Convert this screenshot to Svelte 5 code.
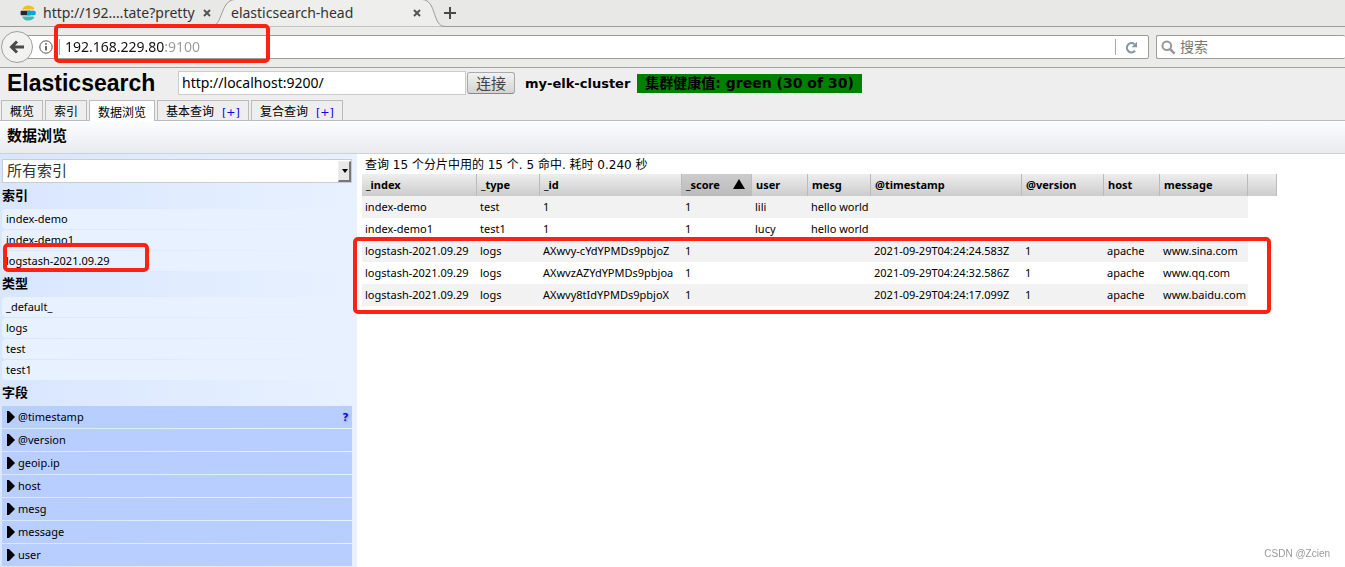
<script lang="ts">
  interface Column {
    name: string;
    width: number;
  }

  const columns: Column[] = [
    { name: '_index', width: 115 },
    { name: '_type', width: 63 },
    { name: '_id', width: 142 },
    { name: '_score', width: 70 },
    { name: 'user', width: 56 },
    { name: 'mesg', width: 63 },
    { name: '@timestamp', width: 151 },
    { name: '@version', width: 82 },
    { name: 'host', width: 56 },
    { name: 'message', width: 88 },
    { name: '', width: 29 }
  ];

  const rows: string[][] = [
    ['index-demo', 'test', '1', '1', 'lili', 'hello world', '', '', '', ''],
    ['index-demo1', 'test1', '1', '1', 'lucy', 'hello world', '', '', '', ''],
    ['logstash-2021.09.29', 'logs', 'AXwvy-cYdYPMDs9pbjoZ', '1', '', '', '2021-09-29T04:24:24.583Z', '1', 'apache', 'www.sina.com'],
    ['logstash-2021.09.29', 'logs', 'AXwvzAZYdYPMDs9pbjoa', '1', '', '', '2021-09-29T04:24:32.586Z', '1', 'apache', 'www.qq.com'],
    ['logstash-2021.09.29', 'logs', 'AXwvy8tIdYPMDs9pbjoX', '1', '', '', '2021-09-29T04:24:17.099Z', '1', 'apache', 'www.baidu.com']
  ];

  const indices = ['index-demo', 'index-demo1', 'logstash-2021.09.29'];
  const types = ['_default_', 'logs', 'test', 'test1'];
  const fields = ['@timestamp', '@version', 'geoip.ip', 'host', 'mesg', 'message', 'user'];

  const tabs = [
    { label: '概览', more: false },
    { label: '索引', more: false },
    { label: '数据浏览', more: false },
    { label: '基本查询', more: true },
    { label: '复合查询', more: true }
  ];

  let activeTab = $state('数据浏览');
  let sortBy = $state('_score');
  let address = $state('192.168.229.80:9100');
  let baseUri = $state('http://localhost:9200/');

  const tableWidth = $derived(columns.reduce((sum, col) => sum + col.width, 0));
</script>

{#snippet cross()}
  <svg width="8" height="8" viewBox="0 0 8 8"><path d="M1 1L7 7M7 1L1 7" stroke="#555" stroke-width="2" /></svg>
{/snippet}

<div class="browser">
  <div class="tab-strip">
    <div class="browser-tab">
      <svg width="16" height="16" viewBox="0 0 16 16">
        <path d="M2 4.6C3.3 1.8 5.5.4 8.3.4c2.4 0 4.5 1 5.8 2.7.3.5.2.9-.2 1.1l-1.2.4z" fill="#f0bf1a" />
        <path d="M.8 5.8h9.4a2.2 2.2 0 0 1 0 4.4H.8a9 9 0 0 1 0-4.4z" fill="#23282d" />
        <path d="M7 5.8h6.7a2.2 2.2 0 0 1 0 4.4H7z" fill="#07a5de" />
        <path d="M2 11.4h10.7l1.2.4c.4.2.5.6.2 1.1a7.3 7.3 0 0 1-5.8 2.7c-2.8 0-5-1.4-6.3-4.2z" fill="#3ebeb0" />
      </svg>
      <span class="tab-title">http://192.…tate?pretty</span>
      <button class="plain" aria-label="Close tab">{@render cross()}</button>
    </div>
    <div class="browser-tab current">
      <svg class="tab-shape" width="234" height="27" viewBox="0 0 234 27">
        <path d="M0 26.5C12 26.5 9 0 24 -.5H211C226 0 221 26.5 234 26.5" fill="#eeeeec" stroke="#9b9b99" />
      </svg>
      <span class="tab-title">elasticsearch-head</span>
      <button class="plain" aria-label="Close tab">{@render cross()}</button>
    </div>
    <button class="plain" aria-label="New tab">
      <svg width="12" height="12" viewBox="0 0 12 12"><path d="M6 0V12M0 6H12" stroke="#484848" stroke-width="2" /></svg>
    </button>
  </div>

  <div class="nav-bar">
    <button class="back" aria-label="Back">
      <svg width="16" height="14" viewBox="0 0 16 14"><path d="M8 1.5L2.5 7L8 12.5M3 7H15" fill="none" stroke="#4a4a4a" stroke-width="3" /></svg>
    </button>
    <div class="url-bar">
      <svg width="14" height="14" viewBox="0 0 14 14">
        <circle cx="7" cy="7" r="6.2" fill="none" stroke="#555" />
        <path d="M7 6v4.5M7 3.2v1.6" stroke="#444" stroke-width="1.6" />
      </svg>
      <div class="url-text">
        <input class="url-input" aria-label="Address" bind:value={address} />
        <span class="mark mark-url"></span>
      </div>
      <button class="reload" aria-label="Reload">
        <svg width="13" height="13" viewBox="0 0 13 13">
          <path d="M10 9.8A4.6 4.6 0 1 1 9.4 3.2" fill="none" stroke="#8597a6" stroke-width="2.2" />
          <path d="M12 .8V6.2H6.6z" fill="#8597a6" />
        </svg>
      </button>
    </div>
    <div class="search-bar">
      <svg width="15" height="15" viewBox="0 0 15 15">
        <circle cx="5.8" cy="5.8" r="4.3" fill="none" stroke="#979797" stroke-width="2" />
        <path d="M8.8 8.8L13.6 13.6" stroke="#979797" stroke-width="2.6" />
      </svg>
      <input aria-label="搜索" placeholder="搜索" />
    </div>
  </div>
</div>

<div class="app">
  <header>
    <h1>Elasticsearch</h1>
    <form class="connect">
      <input aria-label="Server" bind:value={baseUri} />
      <button type="button">连接</button>
    </form>
    <span class="cluster">my-elk-cluster</span>
    <span class="health">集群健康值: green (30 of 30)</span>
  </header>

  <nav class="app-tabs">
    {#each tabs as tab}
      <button class:active={tab.label === activeTab} onclick={() => (activeTab = tab.label)}>
        {tab.label}{#if tab.more}<span class="more">[+]</span>{/if}
      </button>
    {/each}
  </nav>

  <h2 class="section-title">{activeTab}</h2>

  <div class="browse">
    <aside>
      <div class="index-select">
        <select aria-label="索引">
          <option>所有索引</option>
        </select>
      </div>

      <h3>索引</h3>
      <ul class="filters">
        {#each indices as index}
          <li>
            {index}
            {#if index.startsWith('logstash')}<span class="mark mark-index"></span>{/if}
          </li>
        {/each}
      </ul>

      <h3>类型</h3>
      <ul class="filters">
        {#each types as type}
          <li>{type}</li>
        {/each}
      </ul>

      <h3>字段</h3>
      <ul class="fields">
        {#each fields as field, i}
          <li>
            <svg width="8" height="12" viewBox="0 0 8 12"><path d="M0 0H2L8 6L2 12H0z" /></svg>
            <span>{field}</span>
            {#if i === 0}<a class="help" href="#help">?</a>{/if}
          </li>
        {/each}
      </ul>
    </aside>

    <main>
      <p class="summary">查询 15 个分片中用的 15 个. 5 命中. 耗时 0.240 秒</p>
      <div class="results">
        <table style:width="{tableWidth}px">
          <colgroup>
            {#each columns as col}
              <col style:width="{col.width}px" />
            {/each}
          </colgroup>
          <thead>
            <tr>
              {#each columns as col}
                <th class:sorted={col.name === sortBy} onclick={() => (sortBy = col.name)}>
                  {col.name}
                  {#if col.name === sortBy}
                    <svg width="12" height="10" viewBox="0 0 12 10"><path d="M6 0L12 10H0z" /></svg>
                  {/if}
                </th>
              {/each}
            </tr>
          </thead>
          <tbody>
            {#each rows as row}
              <tr>
                {#each row as cell}
                  <td>{cell}</td>
                {/each}
              </tr>
            {/each}
          </tbody>
        </table>
        <span class="mark mark-rows"></span>
      </div>
    </main>
  </div>
</div>

<span class="watermark">CSDN @Zcien</span>

<style>
  :global(body) {
    background: #fff;
    color: #000;
    font-family: 'Noto Sans', 'Noto Sans CJK SC', sans-serif;
    font-size: 11px;
  }

  :global(#app) {
    display: flex;
    flex-direction: column;
    min-height: 100vh;
  }

  h1, h2, h3, p, ul {
    margin: 0;
    padding: 0;
  }

  button, input, select {
    box-sizing: border-box;
    font-family: inherit;
    margin: 0;
  }

  svg {
    display: block;
    flex: none;
  }

  .plain {
    border: 0;
    padding: 0;
    background: none;
  }

  .browser {
    font-size: 14px;
    color: #333;
  }

  .tab-strip {
    display: flex;
    align-items: center;
    height: 26px;
    background: #e8e8e6;
    border-bottom: 1px solid #9b9b99;
  }

  .browser-tab {
    display: flex;
    align-items: center;
    box-sizing: border-box;
    width: 211px;
    height: 26px;
    padding-left: 20px;
    padding-bottom: 1px;
  }

  .browser-tab.current {
    position: relative;
    width: 231px;
    padding-left: 20px;
    margin-right: 2px;
  }

  .tab-shape {
    position: absolute;
    left: 0;
    top: 0;
  }

  .tab-title {
    position: relative;
    flex: 1;
    white-space: nowrap;
  }

  .browser-tab svg + .tab-title {
    margin-left: 7px;
  }

  .browser-tab.current svg + .tab-title {
    margin-left: 0;
  }

  .browser-tab .plain {
    position: relative;
  }

  .browser-tab.current .plain {
    margin-right: 21px;
  }

  .nav-bar {
    display: flex;
    align-items: center;
    height: 40px;
    background: #ebebe9;
    border-bottom: 1px solid #a2a2a0;
  }

  .back {
    position: relative;
    z-index: 1;
    display: flex;
    align-items: center;
    justify-content: center;
    flex: none;
    width: 32px;
    height: 32px;
    margin-left: 1px;
    padding: 0;
    border: 1px solid #a0a0a0;
    border-radius: 50%;
    background: #f2f2f1;
  }

  .url-bar, .search-bar {
    display: flex;
    align-items: center;
    box-sizing: border-box;
    height: 24px;
    background: #fff;
    border: 1px solid #9c9c9a;
    border-radius: 2px;
  }

  .url-bar {
    flex: 1;
    margin-left: -8px;
    padding-left: 13px;
  }

  .url-text {
    position: relative;
    flex: 1;
    display: flex;
    margin-left: 6px;
    border-left: 1px solid #aaa;
  }

  /* host is dark, port is dimmed */
  .url-input {
    flex: 1;
    height: 16px;
    padding: 0 0 1px 5px;
    border: 0;
    outline: 0;
    font-size: 14px;
    color: transparent;
    background: linear-gradient(90deg, #111 105px, #999 105px);
    background-clip: text;
    -webkit-background-clip: text;
  }

  .reload {
    height: 16px;
    padding: 0 10px 0 9px;
    border: 0;
    border-left: 1px solid #aaa;
    background: none;
  }

  .search-bar {
    width: 189px;
    margin-left: 7px;
    padding-left: 4px;
    border-right: 0;
  }

  .search-bar input {
    flex: 1;
    min-width: 0;
    padding: 0 0 2px 4px;
    border: 0;
    font-size: 14px;
    background: none;
  }

  .search-bar input::placeholder {
    color: #777;
  }

  .app {
    flex: 1;
    display: flex;
    flex-direction: column;
    background: #eee;
  }

  header {
    display: flex;
    align-items: center;
    height: 30px;
    padding: 0 7px;
  }

  h1 {
    width: 171px;
    font-family: 'Liberation Sans', sans-serif;
    font-size: 23px;
    line-height: 30px;
  }

  .connect {
    display: flex;
    align-items: center;
    gap: 1px;
  }

  .connect input {
    width: 288px;
    height: 24px;
    padding: 0 3px 1px;
    border: 1px solid #ccc;
    font-size: 14px;
    background: #fff;
  }

  .connect button {
    width: 48px;
    height: 22px;
    padding: 0;
    border: 1px solid #aaa;
    border-bottom-color: #888;
    border-radius: 3px;
    font-size: 15px;
    line-height: 18px;
    color: #444;
    background: linear-gradient(#f2f2f2, #d4d4d2);
  }

  .cluster, .health {
    font-family: 'DejaVu Sans', 'Noto Sans CJK SC', sans-serif;
    font-size: 13px;
    font-weight: bold;
    line-height: 19px;
    white-space: nowrap;
  }

  .cluster {
    margin: 0 7px 0 10px;
  }

  .health {
    padding: 0 8px;
    font-size: 14px;
    background: #008000;
  }

  .app-tabs {
    display: flex;
    gap: 2px;
    padding: 2px 1px 0;
    border-bottom: 1px solid #bbb;
  }

  .app-tabs button {
    height: 20px;
    padding: 3px 8px 0;
    border: 1px solid #bbb;
    border-bottom: 0;
    font-size: 12px;
    line-height: 16px;
    color: #000;
    background: #eee;
  }

  .app-tabs .active {
    height: 21px;
    margin-bottom: -1px;
    background: #fff;
  }

  .more {
    margin-left: 8px;
    font-family: 'DejaVu Sans', sans-serif;
    font-size: 11px;
    color: #0000ee;
  }

  .section-title {
    height: 32px;
    padding-left: 7px;
    border-bottom: 1px solid #ced3d6;
    font-size: 15px;
    line-height: 28px;
    background: linear-gradient(#fcfdfd, #f2f4f7 50%, #e8ebed);
  }

  .browse {
    flex: 1;
    display: flex;
    background: #fff;
  }

  aside {
    box-sizing: border-box;
    width: 357px;
    flex: none;
    padding: 5px 5px 0 2px;
    background: linear-gradient(90deg, #d8e6fe, #e8f1ff);
  }

  .index-select {
    position: relative;
  }

  .index-select::before {
    content: '';
    position: absolute;
    right: 1px;
    top: 2px;
    width: 10px;
    height: 18px;
    border: 1px solid #eee;
    border-right: 2px solid #777;
    border-bottom: 2px solid #777;
    background: #e8e8e8;
    pointer-events: none;
  }

  .index-select::after {
    content: '';
    position: absolute;
    right: 4px;
    top: 10px;
    border: 3px solid transparent;
    border-top: 4px solid #000;
    border-bottom: 0;
    pointer-events: none;
  }

  select {
    display: block;
    width: 100%;
    height: 24px;
    padding: 0 4px 2px;
    border: 1px solid #ccc;
    border-radius: 0;
    appearance: none;
    font-size: 15px;
    color: #333;
    background: #fff;
  }

  h3 {
    padding-bottom: 2px;
    font-size: 13px;
    line-height: 24px;
  }

  ul {
    display: flex;
    flex-direction: column;
    gap: 1px;
    list-style: none;
  }

  .filters li {
    position: relative;
    padding-left: 4px;
    line-height: 20px;
    border-radius: 4px;
    background: #e8f1ff;
  }

  .fields li {
    display: flex;
    align-items: center;
    gap: 3px;
    padding: 0 4px 0 5px;
    line-height: 22px;
    background: #b8ceff;
  }

  .help {
    margin-left: auto;
    color: #0000dd;
    font-weight: bold;
    text-decoration: none;
    text-shadow: 1px 1px 2px #88a;
  }

  main {
    flex: 1;
    min-width: 0;
    padding-left: 5px;
  }

  .summary {
    padding: 2px 0 0 3px;
    font-family: 'DejaVu Sans', 'Noto Sans CJK SC', sans-serif;
    font-size: 12px;
    line-height: 18px;
  }

  .results {
    position: relative;
  }

  table {
    border-collapse: separate;
    border-spacing: 0;
    table-layout: fixed;
  }

  th, td {
    box-sizing: border-box;
    height: 22px;
    padding: 0 0 0 3px;
    line-height: 20px;
    text-align: left;
    white-space: nowrap;
  }

  th {
    padding-left: 4px;
    border-right: 1px solid #bbb;
    background: linear-gradient(#eee, #ccc);
  }

  th.sorted {
    background: linear-gradient(#ccc, #bbb);
  }

  th svg {
    display: inline-block;
    margin-left: 10px;
  }

  tbody tr:nth-child(odd) td {
    background: #f2f2f2;
  }

  .mark {
    position: absolute;
    box-sizing: border-box;
    border: 4px solid #ff2213;
    border-radius: 5px;
    pointer-events: none;
  }

  .mark-url {
    left: -6px;
    top: -15px;
    width: 216px;
    height: 39px;
  }

  .mark-index {
    left: 1px;
    top: -8px;
    width: 146px;
    height: 29px;
    z-index: 1;
  }

  .mark-rows {
    left: -9px;
    top: 63px;
    width: 918px;
    height: 77px;
  }

  .watermark {
    position: fixed;
    right: 15px;
    bottom: 8px;
    font-family: 'Liberation Sans', sans-serif;
    font-size: 10px;
    color: #999;
  }
</style>
